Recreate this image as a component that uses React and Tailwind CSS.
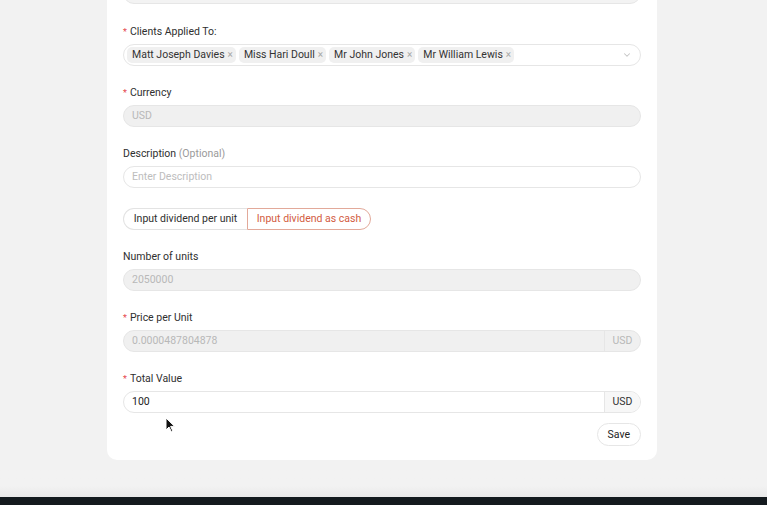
import React from "react";

const clients = ["Matt Joseph Davies", "Miss Hari Doull", "Mr John Jones", "Mr William Lewis"];

const Label = ({ required, children }) => (
  <div className="h-[14px] leading-[14px] mb-[5px] text-[10.5px] text-[#2f2f2f]">
    {required && <span className="text-[#e5484d] mr-[3px] text-[9px] align-top">*</span>}
    {children}
  </div>
);

const Field = ({ label, required, children, last }) => (
  <div className={last ? "" : "mb-[20px]"}>
    <Label required={required}>{label}</Label>
    {children}
  </div>
);

const App = () => {
  return (
    <div
      className="relative min-h-[505px] bg-[#f2f2f2] flex flex-col overflow-hidden"
      style={{ fontFamily: "Roboto, 'Liberation Sans', sans-serif" }}
    >
      <div className="ml-[107px] w-[550px] mt-[-18px] bg-white rounded-b-[10px] px-[16px] pb-[14px]">
        <div className="h-[22px] mb-[21px] rounded-full border border-[#e6e6e6] bg-[#f3f3f3]" />

        <Field label="Clients Applied To:" required>
          <div className="h-[22px] rounded-full border border-[#e6e6e6] flex items-center pl-[3px] pr-[8px]">
            <div className="flex gap-[3px] flex-1">
              {clients.map((c) => (
                <span
                  key={c}
                  className="h-[16px] pl-[5px] pr-[3px] rounded-[5px] bg-[#f0f0f0] flex items-center gap-[3px] text-[10.5px] text-[#333]"
                >
                  {c}
                  <span className="text-[#a8a8a8] text-[10px] leading-none">×</span>
                </span>
              ))}
            </div>
            <svg width="10" height="10" viewBox="0 0 24 24" fill="none" stroke="#c4c4c4" strokeWidth="2.5" strokeLinecap="round" strokeLinejoin="round">
              <path d="M6 9l6 6 6-6" />
            </svg>
          </div>
        </Field>

        <Field label="Currency" required>
          <div className="h-[22px] rounded-full border border-[#e6e6e6] bg-[#f0f0f0] flex items-center px-[8px] text-[10.5px] text-[#b8b8b8]">
            USD
          </div>
        </Field>

        <Field
          label={
            <>
              Description <span className="text-[#9a9a9a]">(Optional)</span>
            </>
          }
        >
          <div className="h-[22px] rounded-full border border-[#e6e6e6] bg-white flex items-center px-[8px] text-[10.5px] text-[#bdbdbd]">
            Enter Description
          </div>
        </Field>

        <div className="flex mb-[20px] h-[22px]">
          <div className="w-[124px] rounded-l-full border border-[#e3e3e3] border-r-0 flex items-center justify-center text-[10.5px] text-[#2f2f2f]">
            Input dividend per unit
          </div>
          <div className="w-[124px] rounded-r-full border border-[#e2a99a] flex items-center justify-center text-[10.5px] text-[#d25b42]">
            Input dividend as cash
          </div>
        </div>

        <Field label="Number of units">
          <div className="h-[22px] rounded-full border border-[#e6e6e6] bg-[#f0f0f0] flex items-center px-[8px] text-[10.5px] text-[#b8b8b8]">
            2050000
          </div>
        </Field>

        <Field label="Price per Unit" required>
          <div className="h-[22px] rounded-full border border-[#e6e6e6] bg-[#f0f0f0] flex text-[10.5px]">
            <div className="flex-1 flex items-center px-[8px] text-[#b8b8b8]">0.0000487804878</div>
            <div className="w-[36px] border-l border-[#e6e6e6] flex items-center justify-center text-[#b8b8b8]">USD</div>
          </div>
        </Field>

        <Field label="Total Value" required last>
          <div className="h-[22px] rounded-full border border-[#e6e6e6] bg-white flex text-[10.5px]">
            <div className="flex-1 flex items-center px-[8px] text-[#222]">100</div>
            <div className="w-[36px] border-l border-[#e6e6e6] rounded-r-full bg-[#f7f7f7] flex items-center justify-center text-[#333]">USD</div>
          </div>
        </Field>

        <div className="flex justify-end mt-[10px]">
          <button className="h-[23px] px-[10px] rounded-full border border-[#e6e6e6] bg-white text-[10.5px] text-[#222]">
            Save
          </button>
        </div>
      </div>

      <div className="flex-1 bg-gradient-to-b from-[#f2f2f2] from-70% to-[#e9e9e9]" />
      <div className="h-[8px] bg-[#141a1e]" />

      <svg className="absolute left-[165px] top-[417px]" width="11" height="16" viewBox="0 0 11 16">
        <path d="M1 1 L1 13 L4 10 L6.5 15 L8 14.3 L5.6 9.4 L9.6 9.4 Z" fill="#111" stroke="#fff" strokeWidth="1" />
      </svg>
    </div>
  );
};

export default App;
